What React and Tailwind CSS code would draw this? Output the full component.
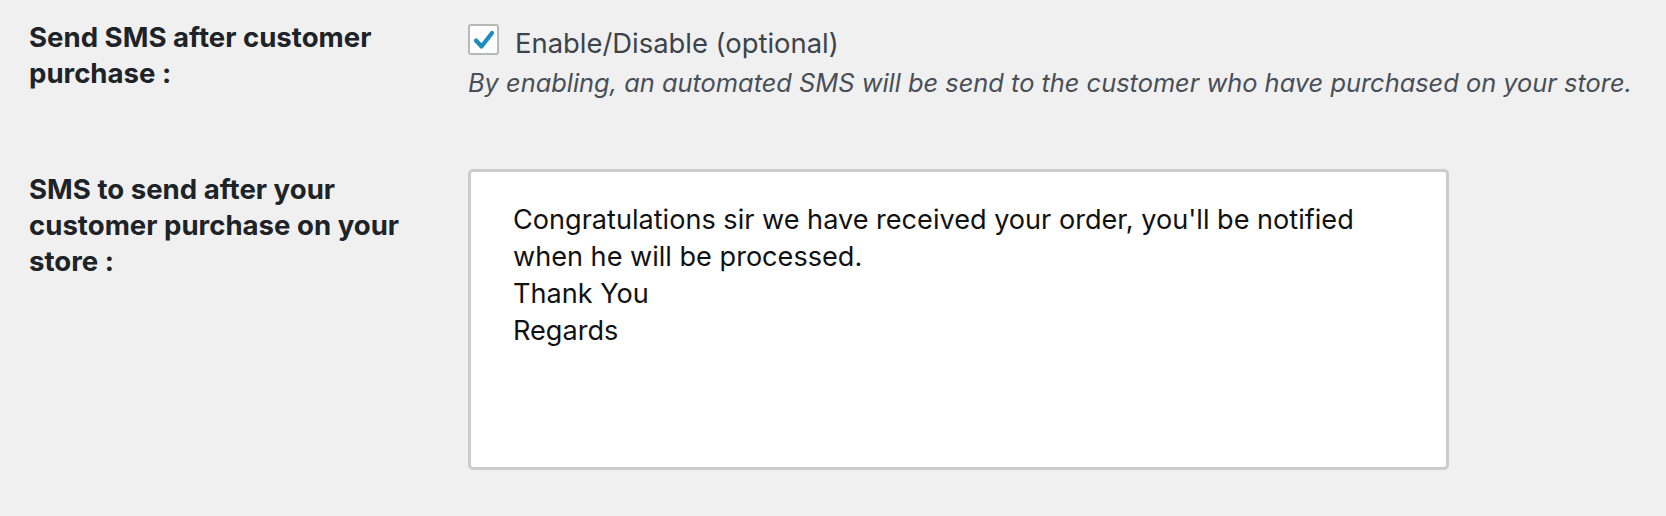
import React from "react";

const message =
  "Congratulations sir we have received your order, you'll be notified\nwhen he will be processed.\nThank You\nRegards";

function Checkbox() {
  return (
    <span className="mt-[5px] flex h-[31px] w-[31px] shrink-0 items-center justify-center rounded-[3px] border-2 border-[#b8b8b8] bg-white">
      <svg viewBox="0 0 27 27" className="h-[27px] w-[27px]">
        <path
          d="M6 14.5 L11.5 20.5 L22 7"
          fill="none"
          stroke="#1e8cbe"
          strokeWidth="4.2"
          strokeLinecap="round"
          strokeLinejoin="round"
        />
      </svg>
    </span>
  );
}

export default function App() {
  return (
    <div className="min-h-screen bg-[#f0f0f1] font-['Inter','Liberation_Sans',sans-serif] text-[26px]">
      {/* Send SMS toggle */}
      <div className="flex pt-[19px]">
        <div className="w-[468px] shrink-0 pl-[29px] pr-[30px] text-[27.6px] font-bold leading-[36px] text-[#1d2327]">
          Send SMS after customer purchase :
        </div>
        <div className="flex flex-col">
          <label className="flex items-start gap-[16px]">
            <Checkbox />
            <span className="mt-[6px] text-[27.4px] leading-[36px] text-[#3c434a]">Enable/Disable (optional)</span>
          </label>
          <p className="mt-[4px] text-[25.4px] italic leading-[36px] text-[#484f56]">
            By enabling, an automated SMS will be send to the customer who have purchased on your store.
          </p>
        </div>
      </div>

      {/* SMS body */}
      <div className="flex pt-[68px]">
        <div className="w-[468px] shrink-0 pl-[29px] pr-[30px] pt-[2px] text-[27.6px] font-bold leading-[36px] text-[#1d2327]">
          SMS to send after your customer purchase on your store :
        </div>
        <textarea
          readOnly
          value={message}
          className="h-[301px] w-[981px] resize-none overflow-hidden rounded-[5px] border-[3px] border-[#cccccc] bg-white pl-[42px] pr-[20px] pt-[29px] text-[27.1px] leading-[37px] text-[#111] outline-none"
        />
      </div>
    </div>
  );
}
